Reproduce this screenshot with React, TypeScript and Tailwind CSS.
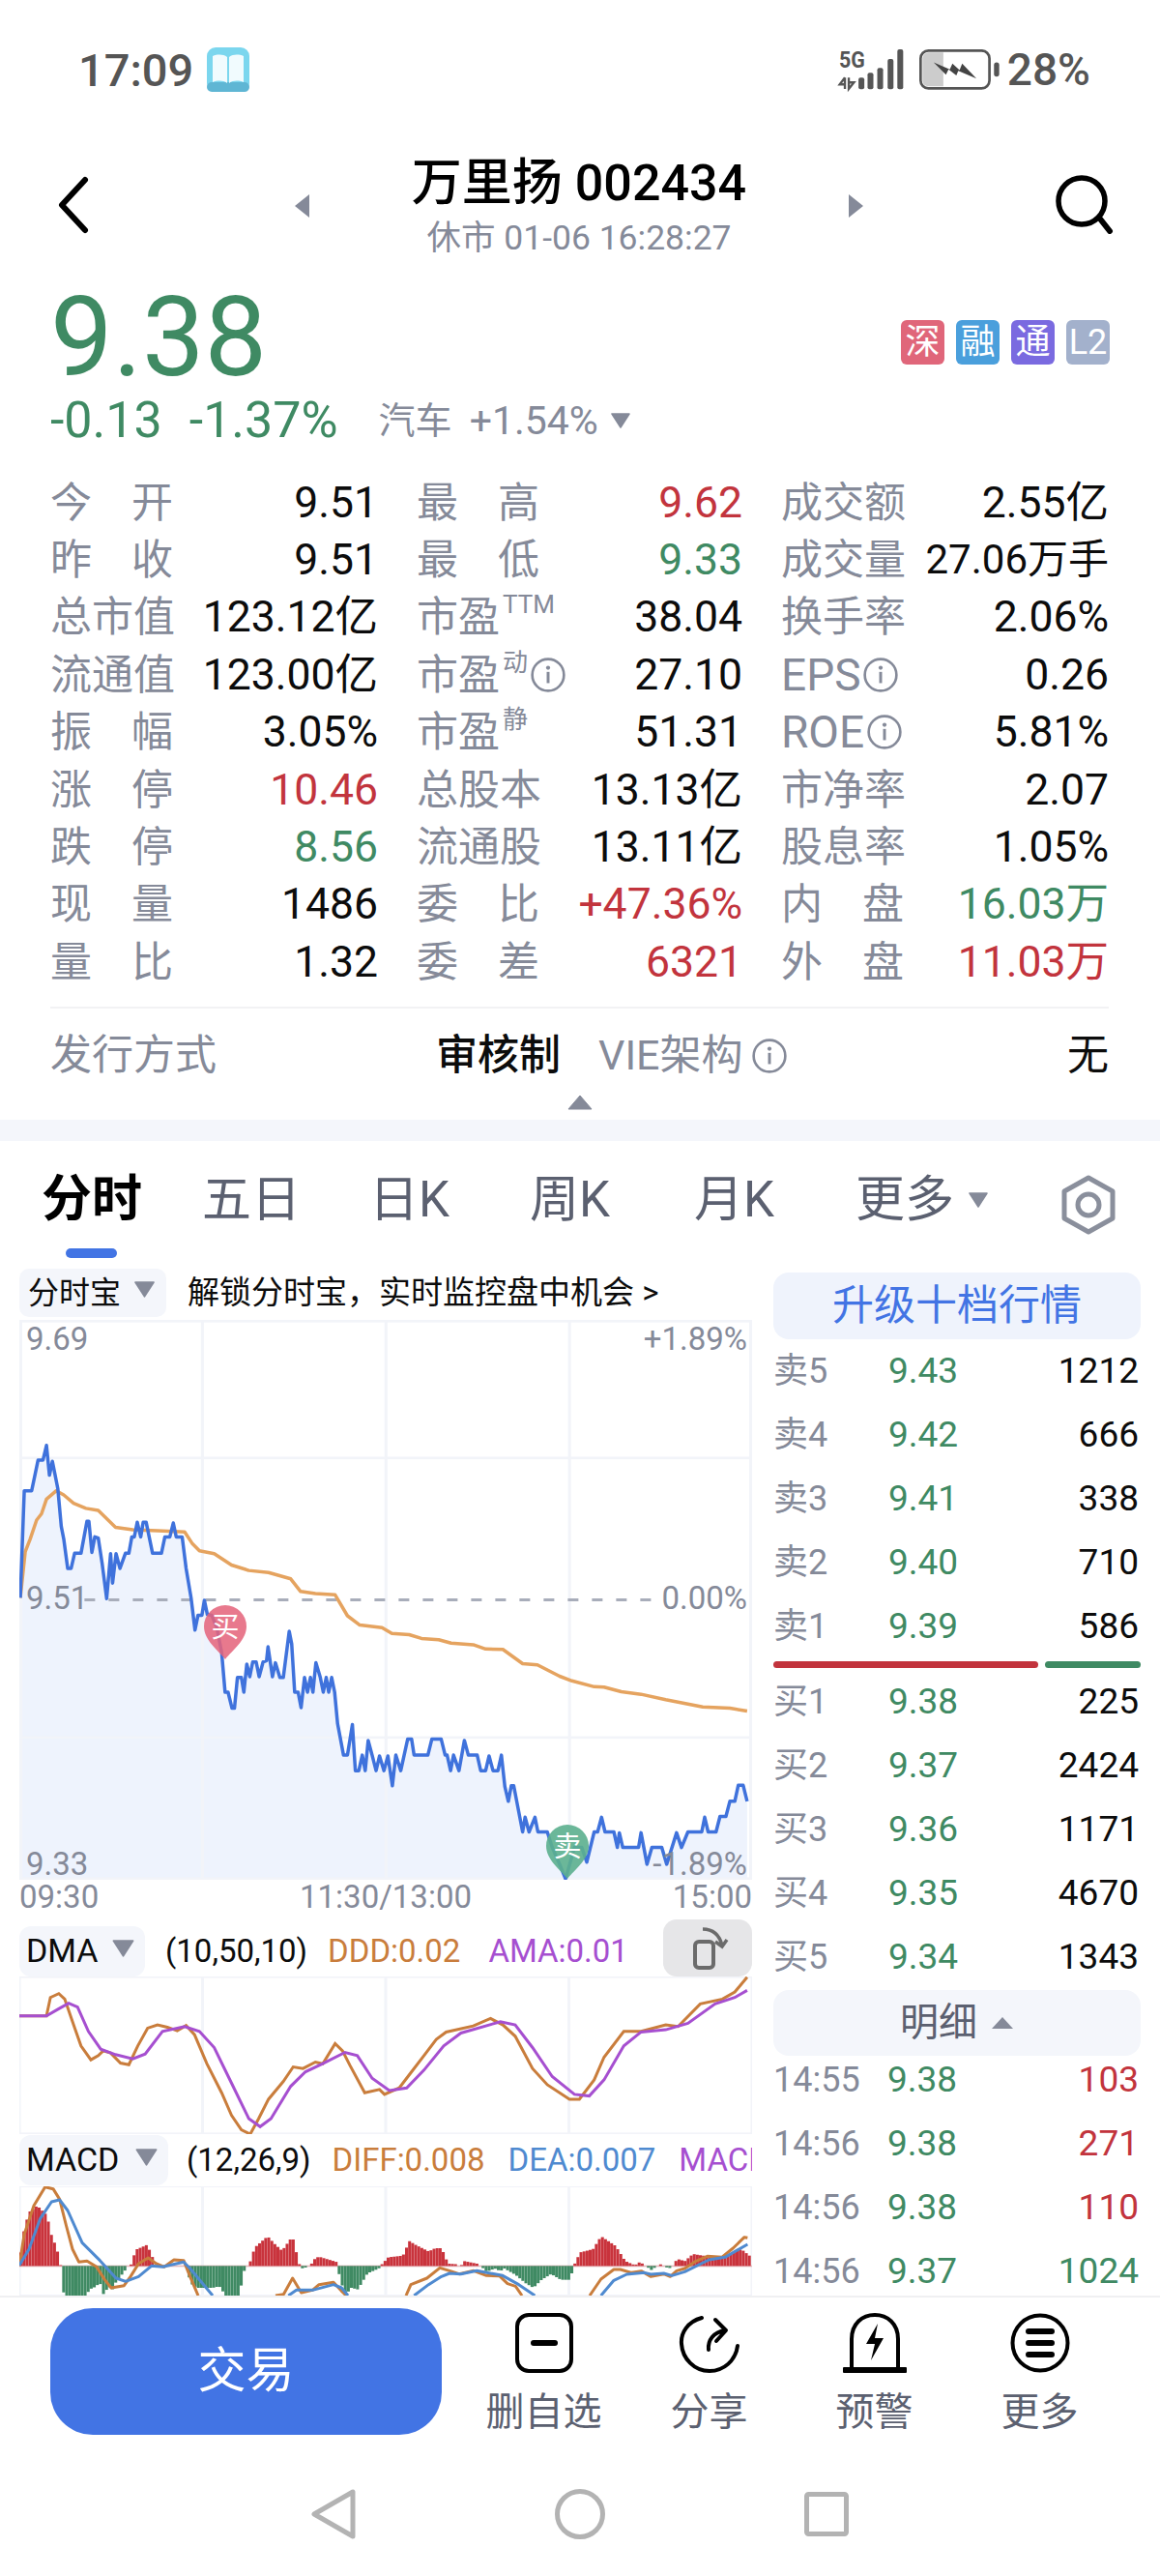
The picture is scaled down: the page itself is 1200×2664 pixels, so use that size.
import React from 'react';

const green = 'text-[#3f8a63]';
const red = 'text-[#c2343d]';
const black = 'text-[#0c0c0c]';

type Cell = { label: string; sup?: string; info?: boolean; spread?: boolean; latin?: boolean; value: string; color?: string; size?: string };

const quoteRows: Cell[][] = [
  [
    { label: '今开', spread: true, value: '9.51' },
    { label: '最高', spread: true, value: '9.62', color: red },
    { label: '成交额', value: '2.55亿' },
  ],
  [
    { label: '昨收', spread: true, value: '9.51' },
    { label: '最低', spread: true, value: '9.33', color: green },
    { label: '成交量', value: '27.06万手', size: 'text-[42px]' },
  ],
  [
    { label: '总市值', value: '123.12亿' },
    { label: '市盈', sup: 'TTM', value: '38.04' },
    { label: '换手率', value: '2.06%' },
  ],
  [
    { label: '流通值', value: '123.00亿' },
    { label: '市盈', sup: '动', info: true, value: '27.10' },
    { label: 'EPS', info: true, latin: true, value: '0.26' },
  ],
  [
    { label: '振幅', spread: true, value: '3.05%' },
    { label: '市盈', sup: '静', value: '51.31' },
    { label: 'ROE', info: true, latin: true, value: '5.81%' },
  ],
  [
    { label: '涨停', spread: true, value: '10.46', color: red },
    { label: '总股本', value: '13.13亿' },
    { label: '市净率', value: '2.07' },
  ],
  [
    { label: '跌停', spread: true, value: '8.56', color: green },
    { label: '流通股', value: '13.11亿' },
    { label: '股息率', value: '1.05%' },
  ],
  [
    { label: '现量', spread: true, value: '1486' },
    { label: '委比', spread: true, value: '+47.36%', color: red },
    { label: '内盘', spread: true, value: '16.03万', color: green },
  ],
  [
    { label: '量比', spread: true, value: '1.32' },
    { label: '委差', spread: true, value: '6321', color: red },
    { label: '外盘', spread: true, value: '11.03万', color: red },
  ],
];

const asks = [
  ['卖5', '9.43', '1212'],
  ['卖4', '9.42', '666'],
  ['卖3', '9.41', '338'],
  ['卖2', '9.40', '710'],
  ['卖1', '9.39', '586'],
];
const bids = [
  ['买1', '9.38', '225'],
  ['买2', '9.37', '2424'],
  ['买3', '9.36', '1171'],
  ['买4', '9.35', '4670'],
  ['买5', '9.34', '1343'],
];
const ticks = [
  ['14:55', '9.38', '103', red],
  ['14:56', '9.38', '271', red],
  ['14:56', '9.38', '110', red],
  ['14:56', '9.37', '1024', green],
];

// traced from the reference, coordinates are in crop pixels and get squeezed by the viewBox
const pricePts =
  '42,810 50,555 65,555 78,482 88,482 95,447 101,518 107,485 118,550 125,640 130,670 138,740 145,740 152,704 165,704 177,628 181,628 187,702 193,665 200,668 208,730 217,812 225,705 229,775 236,705 244,740 255,704 262,704 268,665 273,665 279,630 286,665 291,630 297,630 310,704 328,704 335,665 345,665 352,632 358,665 370,665 378,740 388,810 396,887 402,852 410,852 415,816 421,850 430,852 440,880 450,940 457,1035 463,1035 471,1073 476,1073 482,1000 490,1000 495,1035 501,968 507,998 513,963 520,963 526,998 534,963 541,960 544,927 553,998 559,965 568,1000 575,1000 587,890 592,920 598,1035 605,1035 611,1072 618,1000 624,1035 630,1000 635,1035 641,965 650,1000 656,1035 662,1000 667,1035 673,1000 679,1035 685,1110 697,1185 705,1185 715,1112 721,1222 728,1222 735,1185 741,1222 747,1150 755,1185 763,1222 770,1187 779,1222 787,1187 796,1258 803,1185 813,1222 827,1147 835,1147 840,1185 868,1185 876,1147 895,1147 903,1185 907,1185 914,1222 920,1185 931,1222 942,1150 950,1185 968,1185 975,1222 985,1222 992,1187 1000,1222 1010,1222 1017,1185 1024,1260 1031,1295 1037,1258 1042,1258 1060,1368 1065,1333 1073,1368 1085,1333 1091,1368 1110,1368 1120,1405 1135,1445 1147,1480 1165,1405 1180,1405 1190,1440 1205,1368 1212,1368 1220,1333 1227,1368 1245,1368 1252,1405 1256,1370 1263,1405 1295,1405 1300,1370 1312,1445 1322,1405 1342,1405 1352,1445 1372,1370 1382,1405 1395,1368 1423,1368 1429,1333 1436,1368 1452,1368 1460,1331 1472,1331 1480,1295 1490,1295 1497,1257 1507,1257 1515,1295';
const avgPts =
  '42,810 52,700 62,670 75,625 85,610 95,575 115,555 130,565 150,585 175,597 200,602 220,625 235,642 270,648 320,650 375,653 390,680 405,698 435,705 470,732 505,745 545,750 590,765 610,795 640,800 680,803 705,853 730,875 775,881 795,895 830,898 855,907 890,910 915,918 960,922 985,932 1020,933 1060,967 1090,970 1135,997 1160,1008 1205,1022 1225,1023 1260,1034 1300,1040 1350,1053 1425,1070 1480,1073 1515,1080';
const dddPts =
  '40,372 95,372 103,315 120,303 132,320 150,400 165,465 185,508 200,495 210,480 225,487 245,518 262,523 280,465 300,410 320,400 340,407 360,418 378,402 395,430 420,520 450,610 470,680 490,725 508,738 525,690 545,630 575,575 595,530 615,535 640,515 655,520 680,458 695,480 710,525 740,610 770,600 780,615 810,595 835,545 860,495 885,445 905,422 960,403 995,380 1020,400 1045,435 1080,535 1110,585 1155,630 1175,630 1205,570 1225,500 1265,420 1300,420 1350,400 1375,405 1420,335 1465,320 1490,298 1515,252';
const amaPts =
  '40,372 95,372 120,350 140,333 158,345 180,420 205,475 235,492 270,505 295,490 330,420 375,405 405,420 435,470 470,580 505,690 528,715 550,690 590,590 620,545 655,520 700,485 725,495 755,565 790,603 825,595 860,540 900,465 935,425 1015,390 1045,400 1080,470 1120,560 1165,615 1195,620 1225,570 1265,465 1300,422 1350,415 1395,395 1450,335 1490,315 1515,293';

const macdTop: [number, number][] = [
  [0, 277], [5, 225], [15, 160], [30, 110], [55, 90], [70, 105], [85, 120], [100, 185], [115, 220], [125, 262], [128, 277],
  [130, 290], [138, 369], [210, 369], [215, 350], [230, 345], [250, 330], [262, 369], [275, 340], [290, 350], [300, 325], [325, 295], [335, 277],
  [345, 277], [350, 255], [365, 225], [395, 212], [410, 240], [420, 277], [515, 277],
  [520, 280], [530, 330], [550, 345], [600, 345], [620, 340], [640, 369], [680, 369], [690, 330], [700, 280], [708, 277],
  [712, 277], [730, 220], [770, 185], [790, 207], [815, 230], [840, 195], [852, 195], [860, 240], [870, 277], [875, 285], [895, 280], [905, 272], [920, 250], [935, 250], [985, 265], [986, 277],
  [990, 295], [1010, 369], [1030, 345], [1050, 350], [1080, 300], [1115, 285], [1120, 277],
  [1145, 250], [1165, 248], [1190, 245], [1210, 200], [1230, 212], [1270, 232], [1290, 222], [1310, 222], [1330, 270], [1360, 272], [1365, 285], [1380, 262], [1420, 270], [1430, 277],
  [1440, 285], [1450, 295], [1475, 285], [1490, 292], [1500, 290], [1505, 285], [1540, 305], [1570, 330], [1595, 345], [1620, 320], [1650, 302], [1680, 320], [1710, 320], [1718, 280],
  [1720, 277], [1740, 235], [1780, 225], [1805, 185], [1850, 215], [1880, 262], [1910, 275], [1925, 265], [1945, 277], [1960, 290], [1975, 280], [1990, 272], [2015, 285], [2030, 277],
  [2040, 255], [2065, 262], [2090, 240], [2120, 245], [2180, 250], [2240, 225], [2265, 245], [2268, 270], [2274, 277],
];

function macdY(x: number) {
  for (let i = 1; i < macdTop.length; i++) {
    const [x0, y0] = macdTop[i - 1];
    const [x1, y1] = macdTop[i];
    if (x <= x1) return x1 === x0 ? y1 : y0 + ((y1 - y0) * (x - x0)) / (x1 - x0);
  }
  return 277;
}

const macdBars = Array.from({ length: 239 }, (_, i) => {
  const x = i * 9.5;
  return { x, y: macdY(x + 4) };
});

const Tri = ({ className }: { className: string }) => (
  <svg viewBox="0 0 20 16" className={className}>
    <path d="M1 1h18L10 15z" fill="currentColor" stroke="currentColor" strokeLinejoin="round" strokeWidth="1.5" />
  </svg>
);

const Info = () => (
  <svg viewBox="0 0 36 36" className="w-[38px] h-[38px] shrink-0 text-[#858a99]">
    <circle cx="18" cy="18" r="15.5" fill="none" stroke="currentColor" strokeWidth="2.5" />
    <circle cx="18" cy="11" r="2" fill="currentColor" />
    <rect x="16.6" y="15" width="2.8" height="11" fill="currentColor" />
  </svg>
);

const Label = ({ cell }: { cell: Cell }) => {
  if (cell.spread) {
    return (
      <div className="w-[127px] flex justify-between text-[#858a99]">
        <span>{cell.label[0]}</span>
        <span>{cell.label[1]}</span>
      </div>
    );
  }
  return (
    <div className="flex items-center text-[#858a99]">
      <span className={cell.latin ? 'text-[46px]' : ''}>{cell.label}</span>
      {cell.sup && <span className="self-start text-[26px] leading-[30px] -mt-[3px] ml-[3px]">{cell.sup}</span>}
      {cell.info && <span className="ml-[2px] flex"><Info /></span>}
    </div>
  );
};

const PinMark = ({ text, fill, className }: { text: string; fill: string; className: string }) => (
  <div className={`absolute w-[46px] h-[56px] ${className}`}>
    <svg viewBox="0 0 46 56" className="absolute inset-0 w-full h-full">
      <path d="M23 56C15 46 1 36 1 22a22 22 0 0 1 44 0C45 36 31 46 23 56z" fill={fill} />
    </svg>
    <span className="absolute left-0 right-0 top-[5px] text-center text-white text-[29px] leading-[36px]">{text}</span>
  </div>
);

const GridLines = ({ vb }: { vb: string }) => (
  <svg viewBox={vb} preserveAspectRatio="none" className="absolute inset-0 w-full h-full">
    {[0, 1, 2, 3, 4].map((i) => (
      <rect key={i} x={i * 25 - 0.2} y="0" width="0.4" height="100" fill="#f2f4f9" />
    ))}
    <rect x="0" y="0" width="100" height="1" fill="#f2f4f9" />
    <rect x="0" y="99" width="100" height="1" fill="#f2f4f9" />
  </svg>
);

const PillTag = ({ text, w }: { text: string; w: string }) => (
  <div className={`${w} h-[52px] rounded-[12px] bg-[#f4f6fb] flex items-center justify-between pl-[7px] pr-[11px] text-[34px] text-[#0c0c0c] shrink-0`}>
    <span>{text}</span>
    <Tri className="w-[23px] h-[18px] text-[#858a99] -mt-[6px]" />
  </div>
);

const QuoteRow = ({ a, b, c }: { a: string; b: string; c: string }) => (
  <div className="h-[66px] shrink-0 flex items-center pr-[2px] leading-[44px]">
    <span className="w-[119px] text-[36px] text-[#858a99]">{a}</span>
    <span className={`text-[37px] ${green}`}>{b}</span>
    <span className={`flex-1 text-right text-[37px] ${black}`}>{c}</span>
  </div>
);

const BarAction = ({ icon, text }: { icon: React.ReactNode; text: string }) => (
  <div className="w-[171px] flex flex-col items-center">
    <div className="h-[66px] w-[70px] flex items-center justify-center">{icon}</div>
    <span className="mt-[16px] h-[46px] leading-[46px] text-[40px] text-[#5b6070]">{text}</span>
  </div>
);

const App: React.FC = () => {
  return (
    <div className="w-[1200px] h-[2664px] overflow-hidden bg-white flex flex-col font-[Roboto,'Noto_Sans_CJK_SC',sans-serif]">
      {/* status bar */}
      <div className="h-[144px] shrink-0 flex items-center justify-between pl-[81px] pr-[72px] text-[#555555]">
        <div className="flex items-center">
          <span className="text-[47px] font-medium leading-none">17:09</span>
          <svg viewBox="0 0 44 46" className="w-[44px] h-[46px] ml-[14px]">
            <rect width="44" height="46" rx="9" fill="#7bd6ee" />
            <rect y="36" width="44" height="10" rx="5" fill="#5fb6d4" />
            <path d="M6 9c5-2 11-2 15 1v27c-4-3-10-3-15-1zM38 9c-5-2-11-2-15 1v27c4-3 10-3 15-1z" fill="#f1fbfe" />
          </svg>
        </div>
        <div className="flex items-center">
          <svg viewBox="0 0 200 125" className="w-[67px] h-[42px] overflow-visible">
            <text x="0" y="56" fontSize="72" fontWeight="700" fill="#555" textLength="80" lengthAdjust="spacingAndGlyphs" fontFamily="Roboto">5G</text>
            <path d="M18 87v35M18 87L2 108h16M30 87v35l16-20H30" fill="none" stroke="#555" strokeWidth="7" />
            <rect x="60" y="87" width="18" height="36" rx="6" fill="#555" />
            <rect x="88" y="72" width="18" height="51" rx="6" fill="#555" />
            <rect x="118" y="57" width="18" height="66" rx="6" fill="#555" />
            <rect x="150" y="30" width="18" height="93" rx="6" fill="#555" />
            <rect x="180" y="0" width="18" height="123" rx="6" fill="#555" />
          </svg>
          <svg viewBox="0 0 250 125" className="w-[84px] h-[42px] ml-[16px]">
            <rect x="4" y="4" width="212" height="116" rx="24" fill="#fff" stroke="#555" strokeWidth="8" />
            <path d="M10 28a18 18 0 0 1 18-18h46v104H28a18 18 0 0 1-18-18z" fill="#cccccc" />
            <path d="M44 40l50 22 8-18 22 20 8-20 44 46-56-24-6 14-24-18-8 16z" fill="#444" />
            <rect x="230" y="40" width="16" height="44" rx="8" fill="#555" />
          </svg>
          <span className="text-[46px] font-medium leading-none ml-[7px]">28%</span>
        </div>
      </div>

      {/* title bar */}
      <div className="h-[140px] shrink-0 flex justify-between px-[50px]">
        <svg viewBox="0 0 60 80" className="w-[60px] h-[80px] mt-[28px] -ml-[2px]">
          <path d="M40 14L16 40l24 26" fill="none" stroke="#000" strokeWidth="6" strokeLinecap="round" strokeLinejoin="round" />
        </svg>
        <div className="flex items-start">
          <svg viewBox="0 0 16 24" className="w-[16px] h-[24px] mt-[57px] text-[#858a99]">
            <path d="M15 0v24L0 12z" fill="currentColor" />
          </svg>
          <div className="w-[556px] flex flex-col items-center pt-[18px]">
            <div className="h-[56px] leading-[56px] text-[52px] font-medium text-black">万里扬 002434</div>
            <div className="h-[46px] leading-[46px] mt-[5px] text-[35.5px] text-[#858a99]">休市 01-06 16:28:27</div>
          </div>
          <svg viewBox="0 0 16 24" className="w-[16px] h-[24px] mt-[57px] text-[#858a99]">
            <path d="M1 0v24L16 12z" fill="currentColor" />
          </svg>
        </div>
        <svg viewBox="0 0 62 62" className="w-[62px] h-[62px] mt-[36px] -mr-[2px]">
          <circle cx="29" cy="28" r="24" fill="none" stroke="#000" strokeWidth="5.5" />
          <path d="M47 45l11 14" stroke="#000" strokeWidth="6" strokeLinecap="round" />
        </svg>
      </div>

      {/* price */}
      <div className="h-[206px] shrink-0 pl-[52px] pr-[52px]">
        <div className="flex items-center justify-between pt-[4px] h-[125px]">
          <span className={`text-[115px] leading-[100px] ${green}`}>9.38</span>
          <div className="flex gap-[12px] mt-[10px] text-white text-[36px] leading-none">
            <span className="w-[45px] h-[46px] rounded-[6px] bg-[#e0667a] flex items-center justify-center">深</span>
            <span className="w-[45px] h-[46px] rounded-[6px] bg-[#4a9fdc] flex items-center justify-center">融</span>
            <span className="w-[45px] h-[46px] rounded-[6px] bg-[#7a6ae0] flex items-center justify-center">通</span>
            <span className="w-[45px] h-[46px] rounded-[6px] bg-[#a3b1cc] flex items-center justify-center">L2</span>
          </div>
        </div>
        <div className="h-[52px] flex items-center leading-none whitespace-nowrap">
          <span className={`text-[52px] ${green}`}>-0.13</span>
          <span className={`text-[52px] ml-[28px] ${green}`}>-1.37%</span>
          <span className="text-[38px] ml-[42px] text-[#858a99]">汽车</span>
          <span className="text-[41px] ml-[18px] text-[#858a99]">+1.54%</span>
          <Tri className="w-[22px] h-[16px] ml-[12px] text-[#858a99]" />
        </div>
      </div>

      {/* quote table */}
      <div className="shrink-0 pl-[52px] pr-[53px] text-[43px]">
        {quoteRows.map((row, i) => (
          <div key={i} className="h-[59.4px] grid grid-cols-[339px_337px_339px] gap-x-[40px] leading-[50px]">
            {row.map((cell, j) => (
              <div key={j} className="flex items-center justify-between whitespace-nowrap">
                <Label cell={cell} />
                <span className={`${cell.size ?? 'text-[44.5px]'} ${cell.color ?? black}`}>{cell.value}</span>
              </div>
            ))}
          </div>
        ))}
        <div className="mt-[16px] h-[2px] bg-[#f2f2f4]" />
        <div className="mt-[9px] h-[80px] flex items-center">
          <span className="text-[#858a99]">发行方式</span>
          <span className="ml-[227px] font-medium text-[#0c0c0c]">审核制</span>
          <span className="ml-[39px] text-[#858a99]">VIE架构</span>
          <span className="ml-[8px] flex"><Info /></span>
          <span className="ml-auto text-[#0c0c0c]">无</span>
        </div>
      </div>
      <svg viewBox="0 0 26 16" className="w-[26px] h-[16px] shrink-0 self-center text-[#858a99]">
        <path d="M13 1l12 14H1z" fill="currentColor" stroke="currentColor" strokeLinejoin="round" />
      </svg>
      <div className="h-[22px] mt-[10px] shrink-0 bg-[#f4f6fb]" />

      {/* tabs */}
      <div className="h-[132px] shrink-0 pt-[37px]">
        <div className="flex h-[48px] items-center text-[51px] leading-[48px] text-[#5b6070] whitespace-nowrap">
          <span className="ml-[43px] font-bold text-black text-[52px]">分时</span>
          <span className="ml-[62px]">五日</span>
          <span className="ml-[71px]">日K</span>
          <span className="ml-[83px]">周K</span>
          <span className="ml-[87px]">月K</span>
          <span className="ml-[84px]">更多</span>
          <Tri className="w-[24px] h-[16px] ml-[13px] text-[#858a99]" />
          <svg viewBox="0 0 58 62" className="w-[58px] h-[62px] ml-[73px] mt-[10px]">
            <path d="M29 3l25 14v28L29 59 4 45V17z" fill="none" stroke="#8a8f9c" strokeWidth="5" strokeLinejoin="round" />
            <circle cx="29" cy="31" r="11" fill="none" stroke="#8a8f9c" strokeWidth="5" />
          </svg>
        </div>
        <div className="ml-[68px] mt-[26px] w-[53px] h-[10px] rounded-full bg-[#4274e4]" />
      </div>

      {/* chart + order book */}
      <div className="h-[1062px] shrink-0 flex gap-[22px] px-[20px] overflow-hidden">
        <div className="w-[758px] shrink-0 flex flex-col text-[33px]">
          <div className="h-[53px] shrink-0 flex items-start">
            <div className="w-[152px] h-[50px] rounded-[10px] bg-[#f4f6fb] flex items-center justify-between pl-[9px] pr-[11px] text-[32px] leading-none text-[#0c0c0c]">
              <span>分时宝</span>
              <Tri className="w-[23px] h-[17px] text-[#858a99] -mt-[6px]" />
            </div>
            <span className="ml-[22px] h-[50px] flex items-center text-[33px] leading-none text-[#0c0c0c] whitespace-nowrap">解锁分时宝，实时监控盘中机会 &gt;</span>
          </div>

          {/* price chart */}
          <div className="relative h-[579px] shrink-0 text-[#858a99] leading-[40px]">
            <svg viewBox="40 148 1485 1334" preserveAspectRatio="none" className="absolute inset-0 w-full h-full">
              <polygon points={`${pricePts} 1515,1482 42,1482`} fill="#eef3fd" />
              <g fill="#f2f4f9">
                <rect x="40" y="148" width="6" height="1334" />
                <rect x="408" y="148" width="6" height="1334" />
                <rect x="780" y="148" width="6" height="1334" />
                <rect x="1152" y="148" width="6" height="1334" />
                <rect x="1519" y="148" width="6" height="1334" />
                <rect x="40" y="148" width="1485" height="6" />
                <rect x="40" y="474" width="1485" height="6" />
                <rect x="40" y="1140" width="1485" height="6" />
                <rect x="40" y="1476" width="1485" height="6" />
              </g>
              <line x1="172" y1="815" x2="1325" y2="815" stroke="#a8adba" strokeWidth="3" strokeDasharray="11 14" vectorEffect="non-scaling-stroke" />
              <polyline points={avgPts} fill="none" stroke="#e5a35f" strokeWidth="3.5" strokeLinejoin="round" vectorEffect="non-scaling-stroke" />
              <polyline points={pricePts} fill="none" stroke="#3f72dc" strokeWidth="3.5" strokeLinejoin="round" vectorEffect="non-scaling-stroke" />
            </svg>
            <span className="absolute left-[7px] top-[0px]">9.69</span>
            <span className="absolute right-[5px] top-[0px]">+1.89%</span>
            <span className="absolute left-[7px] top-[268px]">9.51</span>
            <span className="absolute right-[5px] top-[268px]">0.00%</span>
            <span className="absolute left-[7px] bottom-[-4px] h-[40px]">9.33</span>
            <span className="absolute right-[5px] bottom-[-4px] h-[40px]">-1.89%</span>
            <PinMark text="买" fill="#e4647cdd" className="left-[190px] top-[295px]" />
            <PinMark text="卖" fill="#5cb08fe8" className="left-[544px] top-[522px]" />
          </div>

          <div className="h-[41px] shrink-0 flex justify-between leading-[36px] text-[#858a99]">
            <span>09:30</span>
            <span>11:30/13:00</span>
            <span>15:00</span>
          </div>

          {/* DMA */}
          <div className="h-[59px] shrink-0 flex items-end">
            <PillTag text="DMA" w="w-[130px]" />
            <div className="h-[52px] flex items-center whitespace-nowrap leading-none">
              <span className="ml-[21px] text-[#0c0c0c]">(10,50,10)</span>
              <span className="ml-[21px] text-[#c97d3c]">DDD:0.02</span>
              <span className="ml-[29px] text-[#a64fd0]">AMA:0.01</span>
            </div>
            <div className="ml-auto w-[92px] h-[59px] rounded-[14px] bg-[#e6e6e8] flex items-center justify-center">
              <svg viewBox="0 0 50 50" className="w-[50px] h-[50px]">
                <rect x="12" y="19" width="19" height="27" rx="4" fill="none" stroke="#6b6b6b" strokeWidth="4" />
                <path d="M20 6c10 0 17 5 20 17M33 19l7 5 5-7" fill="none" stroke="#6b6b6b" strokeWidth="3.5" />
              </svg>
            </div>
          </div>
          <div className="relative h-[163px] shrink-0">
            <GridLines vb="0 0 100 100" />
            <svg viewBox="40 250 1485 488" preserveAspectRatio="none" className="absolute inset-0 w-full h-full">
              <polyline points={dddPts} fill="none" stroke="#c97d3c" strokeWidth="3" vectorEffect="non-scaling-stroke" />
              <polyline points={amaPts} fill="none" stroke="#a64fd0" strokeWidth="3" vectorEffect="non-scaling-stroke" />
            </svg>
          </div>

          {/* MACD */}
          <div className="h-[54px] shrink-0 flex items-center overflow-hidden">
            <PillTag text="MACD" w="w-[154px]" />
            <div className="flex items-center whitespace-nowrap leading-none">
              <span className="ml-[19px] text-[#0c0c0c]">(12,26,9)</span>
              <span className="ml-[22px] text-[#c97d3c]">DIFF:0.008</span>
              <span className="ml-[24px] text-[#4f8ad0]">DEA:0.007</span>
              <span className="ml-[24px] text-[#a64fd0]">MACD:0.002</span>
            </div>
          </div>
          <div className="relative h-[113px] shrink-0 overflow-hidden">
            <GridLines vb="0 0 100 100" />
            <svg viewBox="0 30 2274 339" className="absolute inset-0 w-full h-full">
              <rect x="0" y="275" width="2274" height="5" fill="#e3b9bd" />
              {macdBars.map((b) =>
                b.y < 275 ? (
                  <rect key={b.x} x={b.x} y={b.y} width="9.2" height={277 - b.y} fill="#c9333c" />
                ) : b.y > 279 ? (
                  <rect key={b.x} x={b.x} y="277" width="9.2" height={b.y - 277} fill="#3f8a63" />
                ) : null,
              )}
              <path
                d="M0 277L15 180 45 90 80 32 105 38 125 70 145 150 165 225 185 265 210 262 240 280 265 320 285 345 325 338 345 310 370 270 400 252 425 270 450 280 480 258 510 260 530 310 555 369M795 369L820 365 848 315 875 360 910 352 930 335 975 328 1000 355 1015 369M1200 369L1215 335 1265 315 1305 283 1335 292 1365 302 1410 292 1450 307 1490 308 1515 332 1540 340 1560 369M1770 369L1805 318 1845 288 1865 288 1900 298 1930 293 1960 310 2000 302 2020 310 2040 292 2065 285 2100 262 2135 247 2180 250 2215 222 2250 188 2260 190"
                fill="none"
                stroke="#c97d3c"
                strokeWidth="9"
                strokeLinejoin="round"
              />
              <path
                d="M0 275L30 225 65 130 100 78 125 72 150 105 195 205 250 260 300 315 330 325 370 310 410 277 445 280 510 265 530 285 600 369M835 369L860 352 910 352 975 335 1000 345 1020 369M1225 369L1270 335 1310 310 1335 300 1370 302 1420 292 1500 307 1550 335 1600 369M1805 369L1845 322 1885 303 1940 298 1960 303 2000 300 2025 307 2065 295 2140 258 2190 250 2260 210"
                fill="none"
                stroke="#4f8ad0"
                strokeWidth="9"
                strokeLinejoin="round"
              />
            </svg>
          </div>
        </div>

        <div className="w-[380px] shrink-0 flex flex-col">
          <div className="mt-[4px] h-[69px] shrink-0 rounded-[16px] bg-[#eff3fc] flex items-center justify-center text-[43px] leading-none text-[#4274e4]">升级十档行情</div>
          {asks.map((r) => (
            <QuoteRow key={r[0]} a={r[0]} b={r[1]} c={r[2]} />
          ))}
          <div className="mt-[3px] h-[7px] shrink-0 flex gap-[7px]">
            <div className="w-[274px] rounded-full bg-[#c2343d]" />
            <div className="flex-1 rounded-full bg-[#3f8a63]" />
          </div>
          <div className="h-[2px] shrink-0" />
          {bids.map((r) => (
            <QuoteRow key={r[0]} a={r[0]} b={r[1]} c={r[2]} />
          ))}
          <div className="mt-[1px] h-[68px] shrink-0 rounded-[16px] bg-[#f4f6fb] flex items-center justify-center text-[40px] leading-none text-[#5b6070]">
            <span>明细</span>
            <svg viewBox="0 0 24 14" className="w-[24px] h-[14px] ml-[14px] text-[#858a99]">
              <path d="M12 1l11 12H1z" fill="currentColor" />
            </svg>
          </div>
          <div className="-mt-[8px] shrink-0">
            {ticks.map((t, i) => (
              <div key={i} className="h-[66px] flex items-center pr-[2px] leading-[44px]">
                <span className="w-[118px] text-[36px] text-[#858a99]">{t[0]}</span>
                <span className={`text-[37px] ${green}`}>{t[1]}</span>
                <span className={`flex-1 text-right text-[37px] ${t[3]}`}>{t[2]}</span>
              </div>
            ))}
          </div>
        </div>
      </div>

      {/* bottom bar */}
      <div className="h-[200px] shrink-0 relative bg-white border-t-2 border-[#f0f0f2] flex pl-[52px]">
        <button className="mt-[11px] w-[405px] h-[131px] rounded-[44px] bg-[#4274e4] text-white text-[50px]">交易</button>
        <div className="flex ml-[20px] pt-[14px]">
          <BarAction
            text="删自选"
            icon={
              <svg viewBox="0 0 64 64" className="w-[64px] h-[64px]">
                <rect x="4" y="3" width="56" height="58" rx="12" fill="none" stroke="#000" strokeWidth="4" />
                <path d="M21 32h22" stroke="#000" strokeWidth="6" strokeLinecap="round" />
              </svg>
            }
          />
          <BarAction
            text="分享"
            icon={
              <svg viewBox="0 0 64 64" className="w-[64px] h-[64px]">
                <path d="M24 6C9 10 2 22 3 33c1 15 13 28 29 28 15 0 27-11 29-26" fill="none" stroke="#000" strokeWidth="4" strokeLinecap="round" />
                <path d="M31 39c-1-10 5-18 17-20M38 8l11 11-10 11" fill="none" stroke="#000" strokeWidth="4" strokeLinecap="round" strokeLinejoin="round" />
              </svg>
            }
          />
          <BarAction
            text="预警"
            icon={
              <svg viewBox="0 0 66 64" className="w-[66px] h-[64px]">
                <path d="M9 59V28C9 12 20 3 33 3s24 9 24 25v31" fill="none" stroke="#000" strokeWidth="4" />
                <rect x="0" y="57" width="66" height="6" rx="1" fill="#000" />
                <path d="M36 12L24 33h9l-4 17 13-23h-9z" fill="#000" />
              </svg>
            }
          />
          <BarAction
            text="更多"
            icon={
              <svg viewBox="0 0 64 64" className="w-[64px] h-[64px]">
                <circle cx="32" cy="32" r="28.5" fill="none" stroke="#000" strokeWidth="4" />
                <path d="M20 20h24M20 32h24M20 44h24" stroke="#000" strokeWidth="6" strokeLinecap="round" />
              </svg>
            }
          />
        </div>
      </div>

      {/* system nav */}
      <div className="h-[52px] shrink-0 flex items-center justify-center gap-[206px]">
        <svg viewBox="0 0 46 52" className="w-[46px] h-[52px]">
          <path d="M43 3v46L3 26z" fill="none" stroke="#b3b3b3" strokeWidth="5" strokeLinejoin="round" />
        </svg>
        <svg viewBox="0 0 52 52" className="w-[52px] h-[52px]">
          <circle cx="26" cy="26" r="23.5" fill="none" stroke="#b3b3b3" strokeWidth="5" />
        </svg>
        <svg viewBox="0 0 46 46" className="w-[46px] h-[46px]">
          <rect x="2.5" y="2.5" width="41" height="41" rx="2" fill="none" stroke="#b3b3b3" strokeWidth="5" />
        </svg>
      </div>
    </div>
  );
};

export default App;
